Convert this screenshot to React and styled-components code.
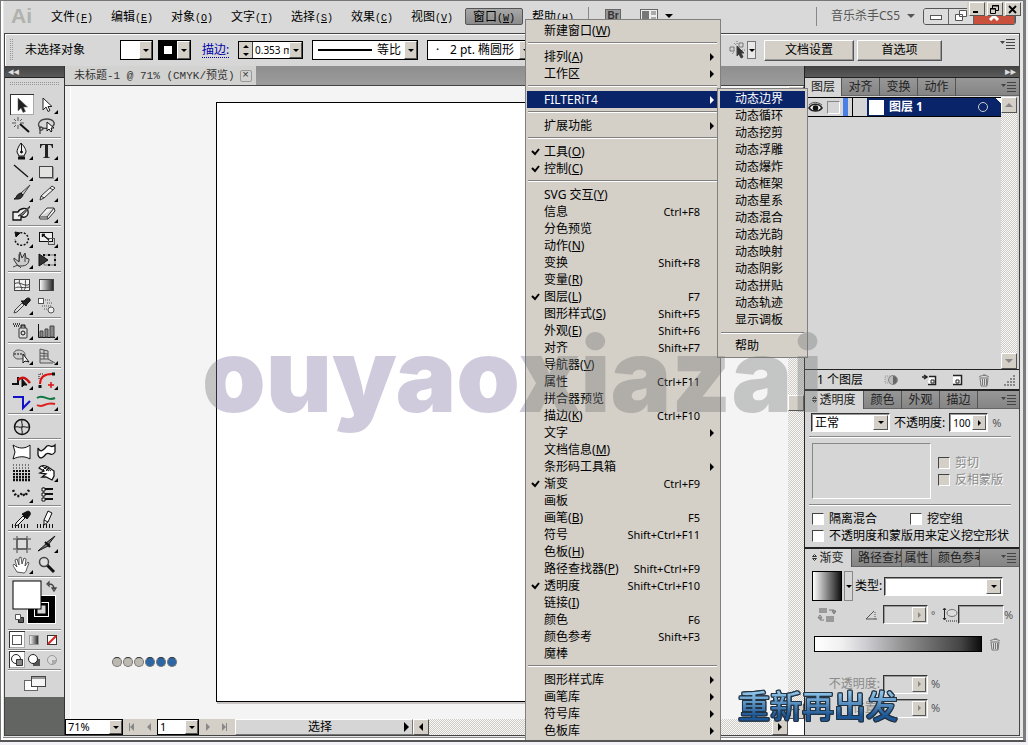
import React, { useState } from "react";
import styled, { createGlobalStyle, css } from "styled-components";

const MENUS = [
  ["文件", "F"],
  ["编辑", "E"],
  ["对象", "O"],
  ["文字", "T"],
  ["选择", "S"],
  ["效果", "C"],
  ["视图", "V"],
  ["窗口", "W"],
  ["帮助", "H"],
];

const SUB_ITEMS = [
  "动态边界", "动态循环", "动态挖剪", "动态浮雕", "动态爆炸", "动态框架", "动态星系",
  "动态混合", "动态光韵", "动态映射", "动态阴影", "动态拼贴", "动态轨迹", "显示调板",
];

// "-" is a separator line
const WINDOW_ITEMS = [
  { label: "新建窗口", k: "W" },
  "-",
  { label: "排列", k: "A", more: true },
  { label: "工作区", more: true },
  "-",
  { label: "FILTERiT4", more: true, open: true },
  "-",
  { label: "扩展功能", more: true },
  "-",
  { label: "工具", k: "O", on: true },
  { label: "控制", k: "C", on: true },
  "-",
  { label: "SVG 交互", k: "Y" },
  { label: "信息", keys: "Ctrl+F8" },
  { label: "分色预览" },
  { label: "动作", k: "N" },
  { label: "变换", keys: "Shift+F8" },
  { label: "变量", k: "R" },
  { label: "图层", k: "L", on: true, keys: "F7" },
  { label: "图形样式", k: "S", keys: "Shift+F5" },
  { label: "外观", k: "E", keys: "Shift+F6" },
  { label: "对齐", keys: "Shift+F7" },
  { label: "导航器", k: "V" },
  { label: "属性", keys: "Ctrl+F11" },
  { label: "拼合器预览" },
  { label: "描边", k: "K", keys: "Ctrl+F10" },
  { label: "文字", more: true },
  { label: "文档信息", k: "M" },
  { label: "条形码工具箱", more: true },
  { label: "渐变", on: true, keys: "Ctrl+F9" },
  { label: "画板" },
  { label: "画笔", k: "B", keys: "F5" },
  { label: "符号", keys: "Shift+Ctrl+F11" },
  { label: "色板", k: "H" },
  { label: "路径查找器", k: "P", keys: "Shift+Ctrl+F9" },
  { label: "透明度", on: true, keys: "Shift+Ctrl+F10" },
  { label: "链接", k: "I" },
  { label: "颜色", keys: "F6" },
  { label: "颜色参考", keys: "Shift+F3" },
  { label: "魔棒" },
  "-",
  { label: "图形样式库", more: true },
  { label: "画笔库", more: true },
  { label: "符号库", more: true },
  { label: "色板库", more: true },
];

// a trailing * puts the small flyout corner on the tool
const TOOL_GROUPS = [
  ["select", "direct*", "wand", "lasso"],
  ["pen*", "type*", "line*", "rect*", "brush*", "pencil*", "blob", "eraser*"],
  ["rotate*", "scale*", "warp*", "free"],
  ["mesh", "gradient", "dropper*", "blend"],
  ["spray*", "graph*"],
  ["builder*", "perspective*"],
  ["reshape*", "corner*", "zigzag*", "waves*"],
  ["wheel"],
  ["pinch", "flag", "halftone", "grab*", "dots*", "list"],
  ["dropbar", "pencilbar"],
  ["artboard", "slice*", "hand*", "zoom"],
];

const S = { stroke: "#111", fill: "none", strokeWidth: 1 };
const ICONS = {
  select: <path d="M8 3v13l3-3 2 4.500 2.500-1-2-4.500h4z" fill="#222" stroke="#666" strokeWidth=".5" />,
  direct: <path d="M8 3v12l3-3 2 4.500 2-1-2-4h4z" fill="#fff" stroke="#222" />,
  wand: <g {...S}><path d="M10 8l9 8" strokeWidth="2" /><path d="M8 1v4M8 9v4M2 7h4M10 7h4M4 3l2 2M12 3l-2 2M4 11l2-2" stroke="#555" /></g>,
  lasso: <g {...S}><path d="M5 12C1 7 6 3 12 3s9 4 6 7c-3 3-9 3-12 1-3 1-1 4 1 3s0-3-2-3v7" stroke="#444" strokeWidth="1.300" /><path d="M12 6v9l2-2 2 3 1-1-1-3h3z" fill="#fff" /></g>,
  pen: <g {...S}><path d="M11 2c-3 4-4 7-4 9l2 4h5l2-4c0-2-1-5-5-9z" fill="#eee" /><path d="M11.500 3v8" /><circle cx="11.500" cy="11" r="1" fill="#111" /><path d="M8 17h7" strokeWidth="3" /></g>,
  type: <path d="M5 3h13v4h-1c0-2-1-3-2-3h-2v11c0 1 1 1.500 2 1.500V17H8v-.500c1 0 2-.500 2-1.500V4H8C7 4 6 5 6 7H5z" fill="#222" />,
  line: <path d="M4 3l14 12" stroke="#111" strokeWidth="1.300" />,
  rect: <g><path d="M5 5h14v12H5z" fill="#999" /><rect x="4.500" y="4.500" width="13" height="11" fill="#e2e2e0" stroke="#444" /></g>,
  brush: <g {...S}><path d="M20 2l-9 8 2 2z" fill="#ccc" stroke="#444" /><path d="M11 10l2 2c-2 5-6 4-9 4 3-1 2-5 7-6z" fill="#333" /></g>,
  pencil: <path d="M17 3l3 2L9 15l-4 2 1-4zM6 13l3 2M15 5l3 2" fill="#eee" stroke="#333" />,
  blob: <g {...S}><path d="M3 8h5c2-4 9-5 10-1 1 5-4 8-7 5v4H3z" fill="#eee" strokeWidth="1.300" /><path d="M20 2l-8 7-4 3 5-1 7-8" fill="#888" stroke="#333" /></g>,
  eraser: <path d="M12 4h7l1 3-7 8H5l-1-2zM4 13h8l7-9M12 13l1 2" fill="#f0f0f0" stroke="#333" />,
  rotate: <g {...S}><path d="M7 5c7-4 13 2 11 7-3 7-13 5-13-2" strokeWidth="1.500" strokeDasharray="2 1.500" /><path d="M5 3l5 1-4 4z" fill="#111" /></g>,
  scale: <g {...S}><rect x="4.500" y="3.500" width="13" height="9" fill="#eee" /><rect x="13.500" y="9.500" width="6" height="6" stroke="#555" /><path d="M7 5l7 6M7 5.500h3M7.500 5v3" strokeWidth="1.500" /></g>,
  warp: <g {...S}><path d="M4 8l5 4 1-10 2 6 3-5 1 5 3 1c0 5-3 7-8 7H8L4 10z" fill="#ccc" stroke="#333" /><path d="M3 17l5-2 3 3M9 4v7M15 4v8" stroke="#444" /></g>,
  free: <g {...S}><path d="M9 5h11v10H9z" stroke="#777" /><path d="M8 4h2v2H8zM13 4h2v2h-2zM19 4h2v2h-2zM19 9h2v2h-2zM19 14h2v2h-2zM13 14h2v2h-2z" fill="#111" stroke="none" /><path d="M4 4v12l9-6z" fill="#333" /></g>,
  mesh: <g {...S}><rect x="4.500" y="4.500" width="15" height="11" fill="#f2f2f2" stroke="#444" /><path d="M4 9c6-4 10 4 16 0M10 4c-3 5 4 8 1 12M16 4c-2 4 2 8-3 12M4 14c4-4 6 0 16-2" stroke="#444" /></g>,
  gradient: <g><defs><linearGradient id="gt"><stop offset="0" stopColor="#fff" /><stop offset="1" stopColor="#222" /></linearGradient></defs><rect x="4.500" y="4.500" width="14" height="11" fill="url(#gt)" stroke="#444" /></g>,
  dropper: <g {...S}><path d="M12 7L5 14l-1 3 3-1 7-7z" fill="#ddd" stroke="#444" /><path d="M11 5l5 5 1-2 3-3c1-3-2-4-4-2l-2 2z" fill="#222" /></g>,
  blend: <g {...S} stroke="#555"><rect x="3.500" y="2.500" width="5" height="5" fill="#fff" /><circle cx="16" cy="14" r="3" fill="#eee" /><path d="M10 4h5M12 7h6M7 10h10M9 13h3" strokeDasharray="1 1" /></g>,
  spray: <g {...S}><rect x="9" y="7" width="8" height="10" rx="1" fill="#ddd" stroke="#333" /><path d="M11 7V4h4v3" fill="#888" /><circle cx="13" cy="12" r="2" /><path d="M3 3h7M4 5h5" strokeDasharray="1 1" strokeWidth="1.500" /></g>,
  graph: <g {...S}><path d="M3.500 3v13.500H20" /><path d="M5 10h3v6H5zM10 8h3v8h-3zM15 5h4v11h-4z" fill="#888" stroke="#444" /></g>,
  builder: <g {...S}><path d="M8 4a4 4 0 1 0 0 9c3 0 7 0 7-4s-4-5-7-5z" fill="#ccc" stroke="#555" /><path d="M4 8h9" strokeDasharray="2 1" /><path d="M13 8v9l2-2 4 1z" fill="#fff" /></g>,
  perspective: <g {...S} stroke="#555"><path d="M5 3v14h13M5 3l8 2v8H5M9 4v9M5 7l8 1M5 10h8M13 13l7 4" fill="#ccc" /></g>,
  reshape: <g {...S}><path d="M2 13h6V6" strokeWidth="2" /><path d="M8 9c5-5 9-1 12 3" stroke="#c11" strokeWidth="2.500" /><path d="M12 8v8l2-2h3z" fill="#111" /></g>,
  corner: <g {...S}><path d="M5 17v-3M17 3h3" strokeWidth="3" /><path d="M5 13C5 6 9 3 17 3" stroke="#d11" strokeWidth="2" /><path d="M4 8V3h5" strokeDasharray="1 1" /><path d="M16 11v6M13 14h6" stroke="#d11" strokeWidth="1.500" /></g>,
  zigzag: <path d="M3 5h10v11l7-7" stroke="#11c" strokeWidth="2" fill="none" />,
  waves: <g {...S} strokeWidth="2"><path d="M2 6c6-5 10 4 18 0" stroke="#174" /><path d="M2 13c6 4 8-4 18-1" stroke="#d22" /></g>,
  wheel: <g {...S}><circle cx="12" cy="10" r="7.500" strokeWidth="1.500" /><path d="M5 10c3-1 4 1 7 0s4 1 7 0M12 3c-1 3 1 4 0 7s1 4 0 7" /></g>,
  pinch: <path d="M3 3c6 4 12 4 17 0v14c-5-3-11-3-17 0l2-7z" fill="#fff" stroke="#111" />,
  flag: <path d="M3 6c3 6 6 1 9-2 3-2 4 3 8-1v7c-4 6-5-1-9 2-3 4-6 6-8 1z" fill="#fff" stroke="#111" strokeWidth="1.300" />,
  halftone: <g {...S}><path d="M3 2h17M3 5h17" strokeDasharray="1 2" /><path d="M3 8h17M3 11h17" strokeDasharray="2 1" strokeWidth="2" /><path d="M3 14h17M3 17h17" strokeDasharray="2 1" strokeWidth="2.500" /></g>,
  grab: <g {...S}><path d="M4 5c2-3 6-3 9-1l6 4v5l-2 4-6-3-4 0 4-3-6-1 4-2z" fill="#fff" strokeWidth="1.300" /><path d="M7 3l7 5M11 4l5 4M8 7l4-4M11 8l3-3" /></g>,
  dots: <path d="M3 6l3 6h4l2-3 3 3 4-6" stroke="#111" fill="none" strokeWidth="2.500" strokeDasharray="2 2" />,
  list: <g {...S}><path d="M9 5h9M9 10h9M9 15h9" strokeWidth="2" /><path d="M8.500 3v14" stroke="#777" /><path d="M7 4h3v3H7zM7 9h3v3H7zM7 14h3v3H7z" fill="#fff" /></g>,
  dropbar: <g {...S}><path d="M2 17h18" strokeWidth="4" strokeDasharray="1 2" /><path d="M13 7l-7 7-1 3 3-1 7-7z" fill="#eee" /><path d="M12 5l5 5 3-4c1-3-1-5-4-3z" fill="#111" /></g>,
  pencilbar: <g {...S}><path d="M2 17h18" strokeWidth="4" strokeDasharray="1 2" /><path d="M13 2l4 2-4 9-4 3 0-5z" fill="#fff" /><path d="M9 11l4 2" /></g>,
  artboard: <g {...S} stroke="#444"><rect x="7" y="5" width="10" height="10" fill="#ddd" strokeWidth="1.500" /><path d="M3 5h3M3 15h3M18 5h3M18 15h3M7 2v2M17 2v2M7 16v3M17 16v3" /></g>,
  slice: <g {...S}><path d="M20 2L11 9l2 2zM12 9l3 2-12 6z" fill="#777" /><path d="M10 8l5 5" strokeWidth="2" /></g>,
  hand: <path d="M7 17C4 12 2 10 4 9l3 3-2-7 2-1 2 6V3l2-1 1 7 2-6 2 1-1 7 3-4 1 1-2 5c-1 3-1 4-3 5z" fill="#fff" stroke="#333" strokeWidth=".8" />,
  zoom: <g {...S}><path d="M12 10l7 7" strokeWidth="3" /><circle cx="9" cy="7" r="4.500" fill="#ddd" stroke="#444" strokeWidth="1.500" /></g>,
};

const Icon = ({ name }) => (
  <svg width="24" height="20" viewBox="0 0 24 20" aria-hidden="true">{ICONS[name]}</svg>
);

const Trash = () => (
  <svg width="14" height="14" viewBox="0 0 14 14" stroke="#777" fill="#ddd">
    <path d="M3 5h8l-1 8H4zM2 4c2-2 8-2 10 0M6 2h3M5.500 6v6M7.500 6v6M9.500 6v6" />
  </svg>
);

export default function App() {
  const [tool, setTool] = useState("select");

  return (
    <>
      <GlobalStyle />
      <Frame>
        <TitleBar>
          <Logo>Ai</Logo>
          {MENUS.map(([name, key]) => (
            <MenuTitle key={key} $active={key === "W"}>
              {name}
              <Mono>(<u>{key}</u>)</Mono>
            </MenuTitle>
          ))}
          <Rule />
          <Bridge>Br</Bridge>
          <Arrange>
            <svg width="18" height="14" viewBox="0 0 18 14"><rect x=".5" y=".5" width="17" height="13" fill="#eee" stroke="#666" /><path d="M2 2h7v10H2z" fill="#777" /><path d="M11 2h5v4h-5zM11 8h5v4h-5z" fill="#aaa" /></svg>
            <Tri $dir="down" $size={4} />
          </Arrange>
          <Grow />
          <Rule />
          <Workspace>音乐杀手CS5 <Tri $dir="down" $size={4} $color="#555" /></Workspace>
          <WinButtons>
            <WinButton aria-label="最小化"><svg width="12" height="10"><rect x=".5" y="4.500" width="11" height="4" fill="#fff" stroke="#555" /></svg></WinButton>
            <WinButton aria-label="还原"><svg width="12" height="12" fill="#fff" stroke="#555"><path d="M4.500.5h7v6h-7zM.5 4.500h7v6h-7z" /></svg></WinButton>
            <WinButton $red aria-label="关闭"><svg width="12" height="10" stroke="#fff" strokeWidth="3"><path d="M2 1l8 8M10 1l-8 8" /></svg></WinButton>
          </WinButtons>
        </TitleBar>
        <ClassicButtons>
          <Classic aria-label="最小化窗口"><svg width="9" height="9"><path d="M1 7h5" stroke="#000" strokeWidth="2" /></svg></Classic>
          <Classic aria-label="还原窗口"><svg width="9" height="9" fill="none" stroke="#000"><path d="M2.500 3V.5h6v5H6M.5 3.500h5v5h-5zM2 1h7M0 4h6" /></svg></Classic>
          <Classic aria-label="关闭窗口"><svg width="9" height="9"><path d="M1 1l7 7M8 1L1 8" stroke="#000" strokeWidth="1.800" /></svg></Classic>
        </ClassicButtons>

        <ControlBar>
          <Grip />
          <Selection>未选择对象</Selection>
          <Swatch aria-label="填色"><White /><ArrowCell /></Swatch>
          <Swatch aria-label="描边颜色"><Black><i /></Black><ArrowCell /></Swatch>
          <StrokeLink href="#stroke">描边:</StrokeLink>
          <Spinner>
            <SpinArrows><Tri $dir="up" $size={3} /><Tri $dir="down" $size={3} /></SpinArrows>
            <input aria-label="描边粗细" defaultValue="0.353 m" />
            <ArrowCell />
          </Spinner>
          <Profile>
            <ProfileLine />
            <select aria-label="宽度配置"><option>等比</option></select>
            <ArrowCell />
          </Profile>
          <BrushBox>
            <b>·</b>
            <select aria-label="画笔定义"><option>2 pt. 椭圆形</option></select>
            <ArrowCell />
          </BrushBox>
          <Grow />
          <SimilarTool aria-label="选择类似对象">
            <svg width="18" height="18" viewBox="0 0 18 18" fill="none" stroke="#777"><path d="M1 6h4v4H1zM10 2h4v4h-4z" /><path d="M5 2l3 3M8 0v3M3 13l3-3M13 9h3" strokeDasharray="1 1" /><path d="M8 5v10l2-2 2 4 2-1-2-4h3z" fill="#333" stroke="#444" /></svg>
            <em><Tri $dir="down" $size={3} /></em>
          </SimilarTool>
          <PushButton $w={90}>文档设置</PushButton>
          <PushButton $w={85}>首选项</PushButton>
          <CornerMenu><PanelMenuIcon /></CornerMenu>
        </ControlBar>

        <Body>
          <ToolColumn>
            <DarkHead>◂◂</DarkHead>
            <Toolbox>
              <DotGrip />
              {TOOL_GROUPS.map((group, i) => (
                <ToolGroup key={i}>
                  {group.map((entry) => {
                    const name = entry.replace("*", "");
                    return (
                      <Tool key={name} aria-label={name} $on={tool === name} $more={entry.endsWith("*")} onClick={() => setTool(name)}>
                        <Icon name={name} />
                      </Tool>
                    );
                  })}
                </ToolGroup>
              ))}
              <FillStroke>
                <svg width="48" height="47" viewBox="0 0 48 47">
                  <rect x="15.500" y="15.500" width="28" height="28" fill="#000" stroke="#fff" />
                  <rect x="22.500" y="22.500" width="14" height="14" fill="#000" stroke="#fff" />
                  <rect x="25" y="25" width="9" height="9" fill="#d5d6d5" stroke="#000" />
                  <rect x="1" y="1" width="28" height="28" fill="#fff" stroke="#000" />
                  <path d="M37 4c4 0 5 2 5 5M37 2l-2 2 2 2zM40 8l2 3 2-3z" stroke="#444" fill="none" strokeWidth="1.300" />
                  <path d="M6.500 37.500h5v5h-5z" fill="#555" stroke="#222" /><path d="M3.500 34.500h5v5h-5z" fill="#fff" stroke="#555" />
                </svg>
              </FillStroke>
              <ModeRow>
                <Mode $on aria-label="颜色"><svg width="16" height="16"><rect x="3.500" y="3.500" width="9" height="9" fill="#fff" stroke="#555" /></svg></Mode>
                <Mode aria-label="渐变填色"><svg width="16" height="16"><rect x="3.500" y="3.500" width="9" height="9" fill="url(#gt)" stroke="#999" /></svg></Mode>
                <Mode aria-label="无"><svg width="16" height="16"><rect x="3.500" y="3.500" width="9" height="9" fill="#fff" stroke="#333" /><path d="M4 12l8-8" stroke="#d22" strokeWidth="2" /></svg></Mode>
              </ModeRow>
              <ModeRow>
                <Mode $on aria-label="正常绘图"><svg width="16" height="16"><circle cx="7" cy="7" r="4.500" fill="#fff" stroke="#222" /><path d="M7.500 7.500h6v6h-6z" fill="#888" stroke="#333" /></svg></Mode>
                <Mode aria-label="背面绘图"><svg width="16" height="16"><path d="M7 7h7v7H7z" fill="#555" /><circle cx="7" cy="7" r="4.500" fill="#fff" stroke="#222" /></svg></Mode>
                <Mode aria-label="内部绘图"><svg width="16" height="16"><circle cx="8" cy="8" r="4.500" fill="#ddd" stroke="#999" /><path d="M8 8h4v4H8z" fill="#aaa" /></svg></Mode>
              </ModeRow>
              <ScreenMode aria-label="更改屏幕模式">
                <svg width="24" height="18" viewBox="0 0 24 18"><rect x="1.500" y="5.500" width="13" height="10" fill="#fff" stroke="#666" /><rect x="8.500" y="1.500" width="14" height="10" fill="#f5f5f5" stroke="#444" /><path d="M9 3h13" stroke="#999" strokeWidth="2" /></svg>
              </ScreenMode>
            </Toolbox>
          </ToolColumn>

          <Document>
            <DocTabs>
              <DocTab>未标题-1 @ 71% (CMYK/预览)<button aria-label="关闭文档">×</button></DocTab>
            </DocTabs>
            <CanvasRow>
              <Canvas>
                <Artboard />
                <Beads>
                  {[0, 0, 0, 1, 1, 1].map((blue, i) => <Bead key={i} $blue={blue} />)}
                </Beads>
              </Canvas>
              <VTrack>
                <ScrollButton><Tri $dir="up" $size={4} /></ScrollButton>
                <ScrollButton as="span" />
                <ScrollButton><Tri $dir="down" $size={4} /></ScrollButton>
              </VTrack>
            </CanvasRow>
            <StatusBar>
              <StatusSelect $w={58}>
                <select aria-label="缩放"><option>71%</option></select>
                <ArrowCell />
              </StatusSelect>
              <Steps><b /><Tri $dir="left" $size={4} $color="#888" /></Steps>
              <Steps><Tri $dir="left" $size={4} $color="#888" /></Steps>
              <StatusSelect $w={42}>
                <select aria-label="画板"><option>1</option></select>
                <ArrowCell />
              </StatusSelect>
              <Steps><Tri $dir="right" $size={4} $color="#888" /></Steps>
              <Steps><Tri $dir="right" $size={4} $color="#888" /><b /></Steps>
              <StatusText><span>选择</span><Tri $dir="right" $size={5} /></StatusText>
              <ScrollButton><Tri $dir="left" $size={4} /></ScrollButton>
              <HTrack />
              <ScrollButton><Tri $dir="right" $size={4} /></ScrollButton>
              <Corner />
            </StatusBar>
          </Document>

          <Panels>
            <DarkHead $right>▸▸</DarkHead>
            <LayersPanel>
              <Tabs tabs={[["图层", 37], ["对齐", 38], ["变换", 38], ["动作", 38]]} />
              <LayerList>
                <LayerRows>
                  <LayerRow>
                    <svg width="15" height="13" viewBox="0 0 15 13"><path d="M1 7c3-5 10-5 13 0-3 4-10 4-13 0z" fill="#fff" stroke="#222" strokeWidth="1.500" /><circle cx="7.500" cy="7" r="2.800" fill="#111" /><path d="M1 4c4-4 9-3 13 0" stroke="#555" fill="none" /></svg>
                    <LockBox />
                    <ColorBar />
                    <LayerName><i />图层 1<Target /></LayerName>
                  </LayerRow>
                </LayerRows>
                <LayerTrack>
                  <ScrollButton><Tri $dir="up" $size={4} $color="#888" /></ScrollButton>
                  <ScrollButton><Tri $dir="down" $size={4} $color="#888" /></ScrollButton>
                </LayerTrack>
              </LayerList>
              <LayerFoot>
                <span>1 个图层</span>
                <svg width="30" height="14" viewBox="0 0 30 14"><path d="M9 3h7v7H9z" fill="#ccc" stroke="#999" strokeDasharray="1 1" /><circle cx="17" cy="7" r="4.500" fill="#bbb" stroke="#888" /><path d="M17 7V3a4 4 0 0 1 0 8z" fill="#666" /></svg>
                <svg width="18" height="14" viewBox="0 0 18 14"><path d="M2 4h4M4 2l3 2-3 2M9 3.500h6.500v8H8" stroke="#222" fill="#fff" strokeWidth="1.500" /><path d="M11 7h3v3h-3z" stroke="#222" fill="none" /></svg>
                <svg width="12" height="14" viewBox="0 0 12 14"><path d="M2 3h8v8H2z" fill="#fff" /><path d="M2 2.500h8.500v9H2" fill="none" stroke="#222" strokeWidth="1.500" /><path d="M5 7h3v3H5z" stroke="#222" fill="none" /></svg>
                <Trash />
                <svg width="12" height="12" stroke="#888" strokeDasharray="2 1" strokeWidth="2"><path d="M0 11h12M3 8h9M6 5h6M9 2h3" /></svg>
              </LayerFoot>
            </LayersPanel>

            <Panel>
              <Tabs updown tabs={[["透明度", 59], ["颜色", 38], ["外观", 38], ["描边", 38]]} />
              <BlendRow>
                <SunkenSelect $w={79}>
                  <select aria-label="混合模式"><option>正常</option></select>
                  <ArrowCell />
                </SunkenSelect>
                <label htmlFor="opacity">不透明度:</label>
                <NumBox $w={39} $on><input id="opacity" defaultValue="100" /><i><Tri $dir="right" $size={3} /></i></NumBox>
                <Pct>%</Pct>
              </BlendRow>
              <Groove />
              <MaskRow>
                <Thumb />
                <div>
                  <Check disabled><input type="checkbox" disabled />剪切</Check>
                  <Check disabled><input type="checkbox" disabled />反相蒙版</Check>
                </div>
              </MaskRow>
              <Groove />
              <Checks>
                <Check><input type="checkbox" />隔离混合</Check>
                <Check><input type="checkbox" />挖空组</Check>
                <Check><input type="checkbox" />不透明度和蒙版用来定义挖空形状</Check>
              </Checks>
            </Panel>

            <GradientPanel>
              <Tabs updown tabs={[["渐变", 47], ["路径查找器", 50], ["属性", 30], ["颜色参考", 48]]} />
              <TypeRow>
                <GradSwatch />
                <GradDrop aria-label="渐变库"><Tri $dir="down" $size={3} /></GradDrop>
                <label htmlFor="gtype">类型:</label>
                <SunkenSelect $w={119}>
                  <select id="gtype"><option> </option></select>
                  <ArrowCell />
                </SunkenSelect>
              </TypeRow>
              <AngleRow>
                <svg width="20" height="18" viewBox="0 0 20 18" fill="#999"><path d="M2 2h8v5H2zM9 10h8v6H9z" /><path d="M12 4h5v3M15 5l2 3 2-3zM7 14H3v-3M1 12l2-3 2 3z" stroke="#777" fill="none" /></svg>
                <svg width="14" height="12" viewBox="0 0 14 12" fill="none" stroke="#555"><path d="M1 10h11M1 10l8-8" /><path d="M10 3v7" strokeDasharray="1 1" /></svg>
                <NumBox $w={45}><input aria-label="角度" disabled /><i><Tri $dir="right" $size={3} $color="#888" /></i></NumBox>
                <sup>°</sup>
                <svg width="16" height="16" viewBox="0 0 16 16" fill="none" stroke="#222"><path d="M2.500 2v10M1 3l1.500-2L4 3M1 11l1.500 2L4 11" /><ellipse cx="10" cy="6" rx="5" ry="3.500" fill="#ddd" stroke="#777" /><path d="M4 14h11" strokeDasharray="1 1" /></svg>
                <NumBox $w={46}><input aria-label="长宽比" disabled /></NumBox>
                <Pct>%</Pct>
              </AngleRow>
              <RampRow><Ramp /><Trash /></RampRow>
              <StopRow><label htmlFor="stop-opacity">不透明度:</label><NumBox $w={45}><input id="stop-opacity" disabled /><i><Tri $dir="right" $size={3} $color="#888" /></i></NumBox><Pct>%</Pct></StopRow>
              <StopRow><label htmlFor="stop-pos">位置:</label><NumBox $w={45}><input id="stop-pos" disabled /><i><Tri $dir="right" $size={3} $color="#888" /></i></NumBox><Pct>%</Pct></StopRow>
            </GradientPanel>
          </Panels>
        </Body>

        <WindowMenu>
          {WINDOW_ITEMS.map((item, i) =>
            item === "-" ? (
              <Separator key={i} />
            ) : (
              <MenuItem key={i} $open={item.open}>
                <Tick>
                  {item.on && <svg width="9" height="8"><path d="M1 3l3 3 4-5" fill="none" stroke="#000" strokeWidth="2" /></svg>}
                </Tick>
                <span>
                  {item.label}
                  {item.k && <>(<u>{item.k}</u>)</>}
                </span>
                <Keys>{item.keys}</Keys>
                <More>{item.more && <Tri $dir="right" $size={4} $color={item.open ? "#fff" : "#000"} />}</More>
                {item.open && (
                  <SubMenu>
                    {SUB_ITEMS.map((s, n) => <SubItem key={s} $on={n === 0}>{s}</SubItem>)}
                    <Separator />
                    <SubItem>帮助</SubItem>
                  </SubMenu>
                )}
              </MenuItem>
            )
          )}
        </WindowMenu>
        <SiteMark>ouyaoxiazai</SiteMark>
        <Signature>重新再出发</Signature>
      </Frame>
    </>
  );
}

function Tabs({ tabs, updown }) {
  return (
    <TabStrip>
      {tabs.map(([name, w], i) => (
        <Tab key={name} $w={w} $on={i === 0} $long={name.length > 3}>
          {updown && i === 0 && <svg width="5" height="9" viewBox="0 0 5 9" fill="none" stroke="#333"><path d="M.5 3.500l2-2 2 2zM.5 5.500l2 2 2-2z" /></svg>}
          {name}
        </Tab>
      ))}
      <Grow />
      <PanelMenuIcon />
    </TabStrip>
  );
}

function PanelMenuIcon() {
  return (
    <svg width="15" height="11" viewBox="0 0 15 11" fill="#444">
      <path d="M0 3h5L2.500 6zM6 1h9v1H6zM6 4h9v1H6zM6 7h9v1H6zM6 10h9v1H6z" />
    </svg>
  );
}

function ArrowCell() {
  return <ArrowFace><Tri $dir="down" $size={3} /></ArrowFace>;
}

const GlobalStyle = createGlobalStyle`
  * { box-sizing: border-box; }
  body {
    margin: 0;
    background: #f2f1f6;
    font: 12px/16px "Noto Sans", "Noto Sans CJK SC", sans-serif;
    color: #000;
    overflow: hidden;
  }
  button, input, select { font: inherit; color: inherit; padding: 0; margin: 0; border: 0; background: none; border-radius: 0; }
  select { appearance: none; outline: none; min-width: 0; flex: 1; }
  input { min-width: 0; outline: none; }
  svg { display: block; flex: none; }
`;

const hatch = css`
  background: repeating-conic-gradient(#cfccc6 0 25%, #f8f8f8 0 50%) 0 0 / 2px 2px;
`;

const raised = css`
  background: #d4d0c8;
  border: 1px solid;
  border-color: #fff #555 #555 #fff;
`;

const Frame = styled.div`
  position: relative;
  display: flex;
  flex-direction: column;
  min-height: calc(100vh - 3px);
  margin-right: 2px;
  padding: 0 3px 4px 4px;
  background: #e4e4e4;
  border-top: 1px solid #777;
  border-right: 3px solid #7c7c7c;
  border-bottom: 2px solid #555;
  box-shadow: inset 1px 0 #777, inset 3px 0 #fff, inset 0 -2px #fff, inset 0 -3px #888;
  overflow: hidden;
`;

const Tri = styled.span`
  display: inline-block;
  flex: none;
  width: 0;
  height: 0;
  border: ${(p) => p.$size}px solid transparent;
  ${({ $dir, $size, $color = "#000" }) => {
    if ($dir === "down") return `border-top-color:${$color};border-bottom-width:0;`;
    if ($dir === "up") return `border-bottom-color:${$color};border-top-width:0;`;
    if ($dir === "left") return `border-right-color:${$color};border-left-width:0;`;
    return `border-left-color:${$color};border-right-width:0;`;
  }}
`;

const Grow = styled.span`
  flex: 1;
`;

const Mono = styled.span`
  font: 10px "Liberation Mono", monospace;
`;

const TitleBar = styled.header`
  display: flex;
  align-items: center;
  height: 32px;
  padding: 0 4px 2px 7px;
  background: #d8d9d8;
`;

const Logo = styled.span`
  width: 31px;
  color: #b1b1ae;
  font: bold 21px "Liberation Sans", sans-serif;
`;

const MenuTitle = styled.button`
  width: ${(p) => (p.$active ? 58 : 60)}px;
  height: 17px;
  line-height: 15px;
  white-space: nowrap;
  ${(p) => p.$active && css`
    margin-left: 3px;
    background: linear-gradient(#a8a8a8, #8a8a8a);
    border: 1px solid #555;
    border-radius: 2px;
  `}
`;

const Rule = styled.i`
  width: 1px;
  height: 19px;
  margin: 0 14px 0 5px;
  background: #888;
`;

const Bridge = styled.span`
  width: 16px;
  height: 14px;
  margin: 0 19px 0 2px;
  border: 1px solid #666;
  background: #999;
  font: bold 10px/12px "Liberation Sans", sans-serif;
  color: #333;
  text-align: center;
`;

const Arrange = styled.span`
  display: flex;
  align-items: center;
  gap: 7px;
`;

const Workspace = styled.button`
  display: flex;
  align-items: center;
  gap: 7px;
  color: #555;
`;

const WinButtons = styled.div`
  display: flex;
  margin-left: 8px;
  height: 17px;
  border: 1px solid #555;
  border-radius: 3px;
  overflow: hidden;
`;

const WinButton = styled.button`
  display: flex;
  align-items: center;
  justify-content: center;
  width: ${(p) => (p.$red ? 41 : 25)}px;
  background: ${(p) => (p.$red ? "#c8503c" : "#dcdcdc")};
  border-right: 1px solid #666;
`;

const ClassicButtons = styled.div`
  position: absolute;
  top: 1px;
  right: 2px;
  display: flex;
  gap: 2px;
  padding-left: 2px;
  background: #d4d0c8;
`;

const Classic = styled.button`
  ${raised}
  width: 16px;
  height: 14px;
  padding: 2px;
`;

const ControlBar = styled.div`
  display: flex;
  align-items: center;
  height: 33px;
  padding: 0 4px;
  background: #d6d7d6;
  border: 1px solid #444;
  border-width: 1px 1px 0;
  box-shadow: inset 1px 1px #fff;
`;

const dots = css`
  background: conic-gradient(#999 25%, transparent 0) 0 0 / 2px 2px;
`;

const Grip = styled.i`
  width: 4px;
  height: 22px;
  ${dots}
`;

const Selection = styled.span`
  width: 107px;
  padding-left: 12px;
`;

const ArrowFace = styled.span`
  display: flex;
  align-items: center;
  justify-content: center;
  flex: none;
  align-self: stretch;
  width: 13px;
  ${raised}
`;

const boxed = css`
  display: flex;
  align-items: center;
  height: 20px;
  background: #fff;
  border: 1px solid #000;
`;

const Swatch = styled.button`
  ${boxed}
  width: 33px;
  margin-right: 5px;
`;

const White = styled.i`
  flex: 1;
`;

const Black = styled.i`
  display: grid;
  place-items: center;
  flex: 1;
  align-self: stretch;
  background: #000;

  i {
    width: 8px;
    height: 8px;
    background: #fff;
  }
`;

const StrokeLink = styled.a`
  width: 31px;
  margin: 0 5px 0 6px;
  color: #00a;
  text-decoration: underline dotted;
  text-underline-offset: 3px;
`;

const Spinner = styled.div`
  ${boxed}
  width: 65px;
  height: 18px;
  margin-right: 9px;

  input {
    width: 36px;
    flex: 1;
    padding-left: 2px;
    font-size: 10px;
  }
`;

const SpinArrows = styled.span`
  display: flex;
  flex-direction: column;
  align-items: center;
  justify-content: space-around;
  align-self: stretch;
  width: 14px;
  border-right: 1px solid #444;
  background: #d4d0c8;
`;

const Profile = styled.div`
  ${boxed}
  width: 106px;
  margin-right: 9px;

  select {
    margin-left: 5px;
  }
`;

const ProfileLine = styled.i`
  width: 54px;
  height: 2px;
  margin-left: 5px;
  background: #000;
`;

const BrushBox = styled.div`
  ${boxed}
  width: 106px;

  b {
    width: 22px;
    padding-left: 8px;
    font-weight: normal;
  }
`;

const SimilarTool = styled.button`
  display: flex;
  align-items: center;
  margin-right: 8px;

  em {
    display: grid;
    place-items: center;
    width: 9px;
    height: 18px;
    border: 1px solid #777;
    background: #e8e8e8;
  }
`;

const PushButton = styled.button`
  width: ${(p) => p.$w}px;
  height: 21px;
  margin-right: 3px;
  ${raised}
  box-shadow: inset -1px -1px #999;
`;

const CornerMenu = styled.span`
  align-self: flex-start;
  margin: 4px 0 0 55px;
`;

const Body = styled.div`
  display: flex;
  flex: 1;
  border: 1px solid #444;
  border-width: 0 1px 1px;
`;

const ToolColumn = styled.aside`
  width: 60px;
  background: #636563;
  border-right: 1px solid #333;
`;

const DarkHead = styled.div`
  height: 12px;
  padding: 0 3px;
  background: linear-gradient(#424242, #5a5a5a);
  border-bottom: 1px solid #222;
  color: #ddd;
  font: 11px/11px "DejaVu Sans", sans-serif;
  text-align: ${(p) => (p.$right ? "right" : "left")};
`;

const Toolbox = styled.div`
  padding: 0 3px;
  background: #d5d6d5;
`;

const DotGrip = styled.div`
  padding: 4px 1px 8px;

  &::before {
    content: "";
    display: block;
    height: 4px;
    ${dots}
  }
`;

const ToolGroup = styled.div`
  display: grid;
  grid-template-columns: 24px 24px;
  column-gap: 1px;
  grid-auto-rows: 21px;
  padding-left: 2px;
  margin-bottom: 4px;
  box-shadow: 0 1px #d5d6d5, 0 2px #888, 0 3px #fff;
`;

const Tool = styled.button`
  position: relative;
  height: 21px;
  ${(p) => p.$on && css`
    background: #fff;
    box-shadow: inset 1px 1px #333, inset -1px -1px #aaa;
  `}

  &::after {
    content: "";
    display: ${(p) => (p.$more ? "block" : "none")};
    position: absolute;
    right: 1px;
    bottom: 1px;
    border: 2px solid #000;
    border-top-color: transparent;
    border-left-color: transparent;
  }
`;

const FillStroke = styled.div`
  padding: 1px 0 2px 4px;
  box-shadow: 0 1px #888, 0 2px #fff;
`;

const ModeRow = styled.div`
  display: flex;
  gap: 1px;
  height: 20px;
  padding: 2px 1px 0;
  box-shadow: 0 1px #888, 0 2px #fff;
`;

const Mode = styled.button`
  width: 17px;
  height: 17px;
  ${(p) => p.$on && css`
    background: #fff;
    box-shadow: inset 1px 1px #333, inset -1px -1px #aaa;
  `}
`;

const ScreenMode = styled.button`
  display: block;
  padding: 6px 0 4px 15px;
`;

const Document = styled.main`
  display: flex;
  flex-direction: column;
  flex: 1;
  min-width: 0;
`;

const DocTabs = styled.div`
  height: 20px;
  background: linear-gradient(#8e8e8e, #9c9c9c);
  border-bottom: 1px solid #444;
`;

const DocTab = styled.div`
  display: inline-flex;
  align-items: center;
  height: 19px;
  padding: 0 4px 0 9px;
  background: #d2d2d0;
  color: #333;
  font-family: "Liberation Mono", "Noto Sans CJK SC", monospace;
  font-size: 11px;
  white-space: nowrap;

  button {
    width: 12px;
    height: 12px;
    margin-left: 5px;
    border: 1px solid #999;
    border-radius: 2px;
    line-height: 9px;
  }
`;

const CanvasRow = styled.div`
  display: flex;
  flex: 1;
`;

const Canvas = styled.div`
  position: relative;
  display: flex;
  flex: 1;
  padding: 16px 0 17px 151px;
  background: #f4f4f4;
  box-shadow: inset 5px 0 #f0f0f0, inset 6px 0 #fff;
`;

const Artboard = styled.div`
  width: 424px;
  background: #fff;
  border: 1px solid #000;
  box-shadow: 1px 2px #c8c4c4;
`;

const Beads = styled.div`
  position: absolute;
  left: 47px;
  bottom: 52px;
  display: flex;
  gap: 1px;
`;

const Bead = styled.i`
  width: 10px;
  height: 10px;
  border: 1px solid #777;
  border-top-color: #333;
  border-radius: 50%;
  background: ${(p) => (p.$blue ? "#2c66a4" : "#bdb8b0")};
`;

const ScrollButton = styled.button`
  display: flex;
  align-items: center;
  justify-content: center;
  flex: none;
  width: 16px;
  height: 16px;
  ${raised}
`;

const VTrack = styled.div`
  display: flex;
  flex-direction: column;
  justify-content: space-between;
  width: 16px;
  ${hatch}
`;

const StatusBar = styled.footer`
  display: flex;
  height: 16px;
  background: #d4d0c8;
`;

const StatusSelect = styled.div`
  ${boxed}
  width: ${(p) => p.$w}px;
  height: 16px;
  padding-left: 2px;
  font-size: 11px;
`;

const Steps = styled.span`
  display: flex;
  align-items: center;
  justify-content: center;
  width: 17px;

  b {
    width: 1px;
    height: 8px;
    background: #888;
  }
`;

const StatusText = styled.div`
  display: flex;
  align-items: center;
  width: 178px;
  margin-left: 2px;
  padding-right: 3px;
  background: #d5d6d5;
  border: 1px solid;
  border-color: #fff #777 #777 #fff;

  span:first-child {
    flex: 1;
    text-align: center;
  }
`;

const HTrack = styled.div`
  flex: 1;
  ${hatch}
`;

const Corner = styled.i`
  width: 16px;
  background: #fff;
`;

const Panels = styled.aside`
  display: flex;
  flex-direction: column;
  width: 215px;
  border-left: 1px solid #222;
  background: #d5d6d5;
`;

const LayersPanel = styled.section`
  display: flex;
  flex-direction: column;
  flex: 1;
`;

const TabStrip = styled.div`
  display: flex;
  align-items: center;
  height: 18px;
  padding-right: 3px;
  background: linear-gradient(#979797, #858585);
  border-bottom: 1px solid #666;
`;

const Tab = styled.button`
  display: flex;
  align-items: center;
  justify-content: ${(p) => (p.$long ? "flex-start" : "center")};
  gap: 2px;
  width: ${(p) => p.$w}px;
  height: 18px;
  padding: 0 1px 0 ${(p) => (p.$long ? 6 : 1)}px;
  overflow: hidden;
  white-space: nowrap;
  border-right: 1px solid #555;
  color: #222;
  ${(p) => p.$on && "background: #d5d6d5;"}
`;

const LayerList = styled.div`
  display: flex;
  flex: 1;
  padding: 1px 2px 0 3px;
  border-bottom: 1px solid #222;
`;

const LayerRows = styled.div`
  flex: 1;
`;

const LayerRow = styled.div`
  display: flex;
  align-items: center;
  height: 20px;
  border-top: 1px solid #000;
  border-bottom: 1px solid #000;
`;

const LockBox = styled.i`
  width: 13px;
  height: 13px;
  margin: 0 3px 0 4px;
  border: 1px solid;
  border-color: #888 #fff #fff #888;
`;

const ColorBar = styled.i`
  width: 10px;
  align-self: stretch;
  border-left: 5px solid #4a7fe6;
  border-right: 1px solid #000;
`;

const LayerName = styled.span`
  display: flex;
  align-items: center;
  align-self: stretch;
  flex: 1;
  margin-left: 14px;
  padding: 0 13px 0 2px;
  background: linear-gradient(225deg, #fff 4px, #0a246a 4px);
  color: #fff;
  font-weight: bold;

  i:first-child {
    width: 15px;
    height: 15px;
    margin-right: 5px;
    background: #fff;
  }
`;

const Target = styled.i`
  width: 10px;
  height: 10px;
  margin-left: auto;
  border: 1px solid #ccc;
  border-radius: 50%;
`;

const LayerTrack = styled.div`
  display: flex;
  flex-direction: column;
  justify-content: space-between;
  ${hatch}
`;

const LayerFoot = styled.div`
  display: flex;
  align-items: center;
  justify-content: space-between;
  height: 19px;
  padding: 0 3px 0 12px;
`;

const Panel = styled.section`
  border-top: 2px solid #222;
`;

const BlendRow = styled.div`
  display: flex;
  align-items: center;
  gap: 4px;
  padding: 4px 6px;
`;

const sunken = css`
  display: flex;
  align-items: center;
  height: 19px;
  background: #fff;
  border: 1px solid;
  border-color: #333 #fff #fff #333;
  box-shadow: inset 1px 1px #999;
`;

const SunkenSelect = styled.div`
  ${sunken}
  width: ${(p) => p.$w}px;
  padding: 1px 1px 1px 3px;

  > span {
    width: 15px;
  }
`;

const NumBox = styled.div`
  ${sunken}
  width: ${(p) => p.$w}px;
  padding: 1px;
  background: ${(p) => (p.$on ? "#fff" : "#d5d6d5")};

  input {
    flex: 1;
    width: 10px;
    padding-left: 2px;
    font-size: 10px;
  }

  i {
    display: grid;
    place-items: center;
    align-self: stretch;
    width: 14px;
    ${raised}
  }
`;

const Pct = styled.span`
  color: #555;
  font-size: 11px;
`;

const Groove = styled.hr`
  height: 2px;
  margin: 0 8px 0 4px;
  border: 0;
  border-top: 1px solid #888;
  border-bottom: 1px solid #fff;
`;

const MaskRow = styled.div`
  display: flex;
  align-items: center;
  gap: 7px;
  padding: 5px 7px;
`;

const Thumb = styled.i`
  width: 119px;
  height: 56px;
  border: 1px solid;
  border-color: #888 #fff #fff #888;
`;

const Check = styled.label`
  display: flex;
  align-items: center;
  gap: 5px;
  height: 17px;
  white-space: nowrap;
  ${(p) => p.disabled && "color: #8a8a8a; text-shadow: 1px 1px #fff;"}

  input {
    appearance: none;
    width: 12px;
    height: 12px;
    border: 1px solid;
    border-color: #444 #fff #fff #444;
    background: ${(p) => (p.disabled ? "#d4d0c8" : "#fff")};
  }
`;

const Checks = styled.div`
  display: grid;
  grid-template-columns: 98px 1fr;
  padding: 4px 0 3px 7px;

  label:last-child {
    grid-column: 1 / -1;
  }
`;

const GradientPanel = styled.section`
  height: 188px;
  border-top: 2px solid #222;
`;

const TypeRow = styled.div`
  display: flex;
  align-items: center;
  gap: 2px;
  padding: 4px 0 4px 7px;
`;

const GradSwatch = styled.i`
  width: 30px;
  height: 30px;
  border: 1px solid #000;
  background: linear-gradient(90deg, #fff, #111);
`;

const GradDrop = styled.button`
  display: grid;
  place-items: center;
  width: 9px;
  height: 30px;
  border: 1px solid #888;
`;

const AngleRow = styled.div`
  display: grid;
  grid-template-columns: 48px 18px 45px 14px 16px 46px auto;
  align-items: center;
  padding-left: 12px;

  sup {
    padding-left: 3px;
    color: #555;
  }
`;

const RampRow = styled.div`
  display: flex;
  align-items: center;
  gap: 6px;
  padding: 12px 0 20px 9px;
`;

const Ramp = styled.i`
  width: 168px;
  height: 16px;
  border: 1px solid #000;
  background: linear-gradient(90deg, #fff, #f0f0f0 16%, #cfcfd4 30%, #909090 54%, #555 80%, #444 88%, #0c0c0c);
`;

const StopRow = styled.div`
  display: grid;
  grid-template-columns: 75px 45px auto;
  align-items: center;
  gap: 3px;
  height: 24px;
  color: #8a8a8a;
  text-align: right;

  > span {
    text-align: left;
  }
`;

const WindowMenu = styled.div`
  position: absolute;
  left: 525px;
  top: 18px;
  z-index: 2;
  width: 196px;
  padding: 2px 2px 1px 1px;
  background: #d4d0c8;
  border: 1px solid #808080;
`;

const Separator = styled.div`
  height: 2px;
  margin: 3px 1px 4px;
  border-top: 1px solid #808080;
  border-bottom: 1px solid #fff;
`;

const MenuItem = styled.div`
  position: relative;
  display: flex;
  align-items: center;
  height: 17px;
  white-space: nowrap;
  ${(p) => p.$open && "background: #0a246a; color: #fff;"}
`;

const Tick = styled.span`
  width: 17px;
  padding-left: 4px;
`;

const Keys = styled.span`
  margin-left: auto;
  font-size: 11px;
`;

const More = styled.span`
  display: flex;
  width: 18px;
  padding-left: 10px;
`;

const SubMenu = styled.div`
  position: absolute;
  left: 100%;
  top: -3px;
  z-index: 3;
  width: 91px;
  padding: 2px;
  margin-left: -1px;
  background: #d4d0c8;
  border: 1px solid #808080;
  color: #000;
`;

const SubItem = styled.div`
  height: 17px;
  padding-left: 15px;
  ${(p) => p.$on && "background: #0a246a; color: #fff;"}
`;

const SiteMark = styled.div`
  position: absolute;
  left: 202px;
  top: 319px;
  z-index: 4;
  padding-bottom: 8px;
  font: 900 102px/110px Inter, "Liberation Sans", sans-serif;
  color: transparent;
  background: linear-gradient(90deg, rgba(110, 112, 110, 0.37) 14px, rgba(125, 114, 160, 0.37) 14px 323px, rgba(115, 116, 118, 0.37) 323px);
  background-clip: text;
  pointer-events: none;
`;

const Signature = styled.div`
  position: absolute;
  left: 738px;
  top: 684px;
  z-index: 4;
  font: 500 32px/38px "Noto Sans CJK SC", sans-serif;
  color: transparent;
  background: linear-gradient(#8fc4e8 20%, #1d5796 80%);
  background-clip: text;
  filter: drop-shadow(1px 0 0 #234) drop-shadow(-1px 0 0 #234) drop-shadow(0 1px 0 #234) drop-shadow(0 -1px 0 #234);
  pointer-events: none;
`;
